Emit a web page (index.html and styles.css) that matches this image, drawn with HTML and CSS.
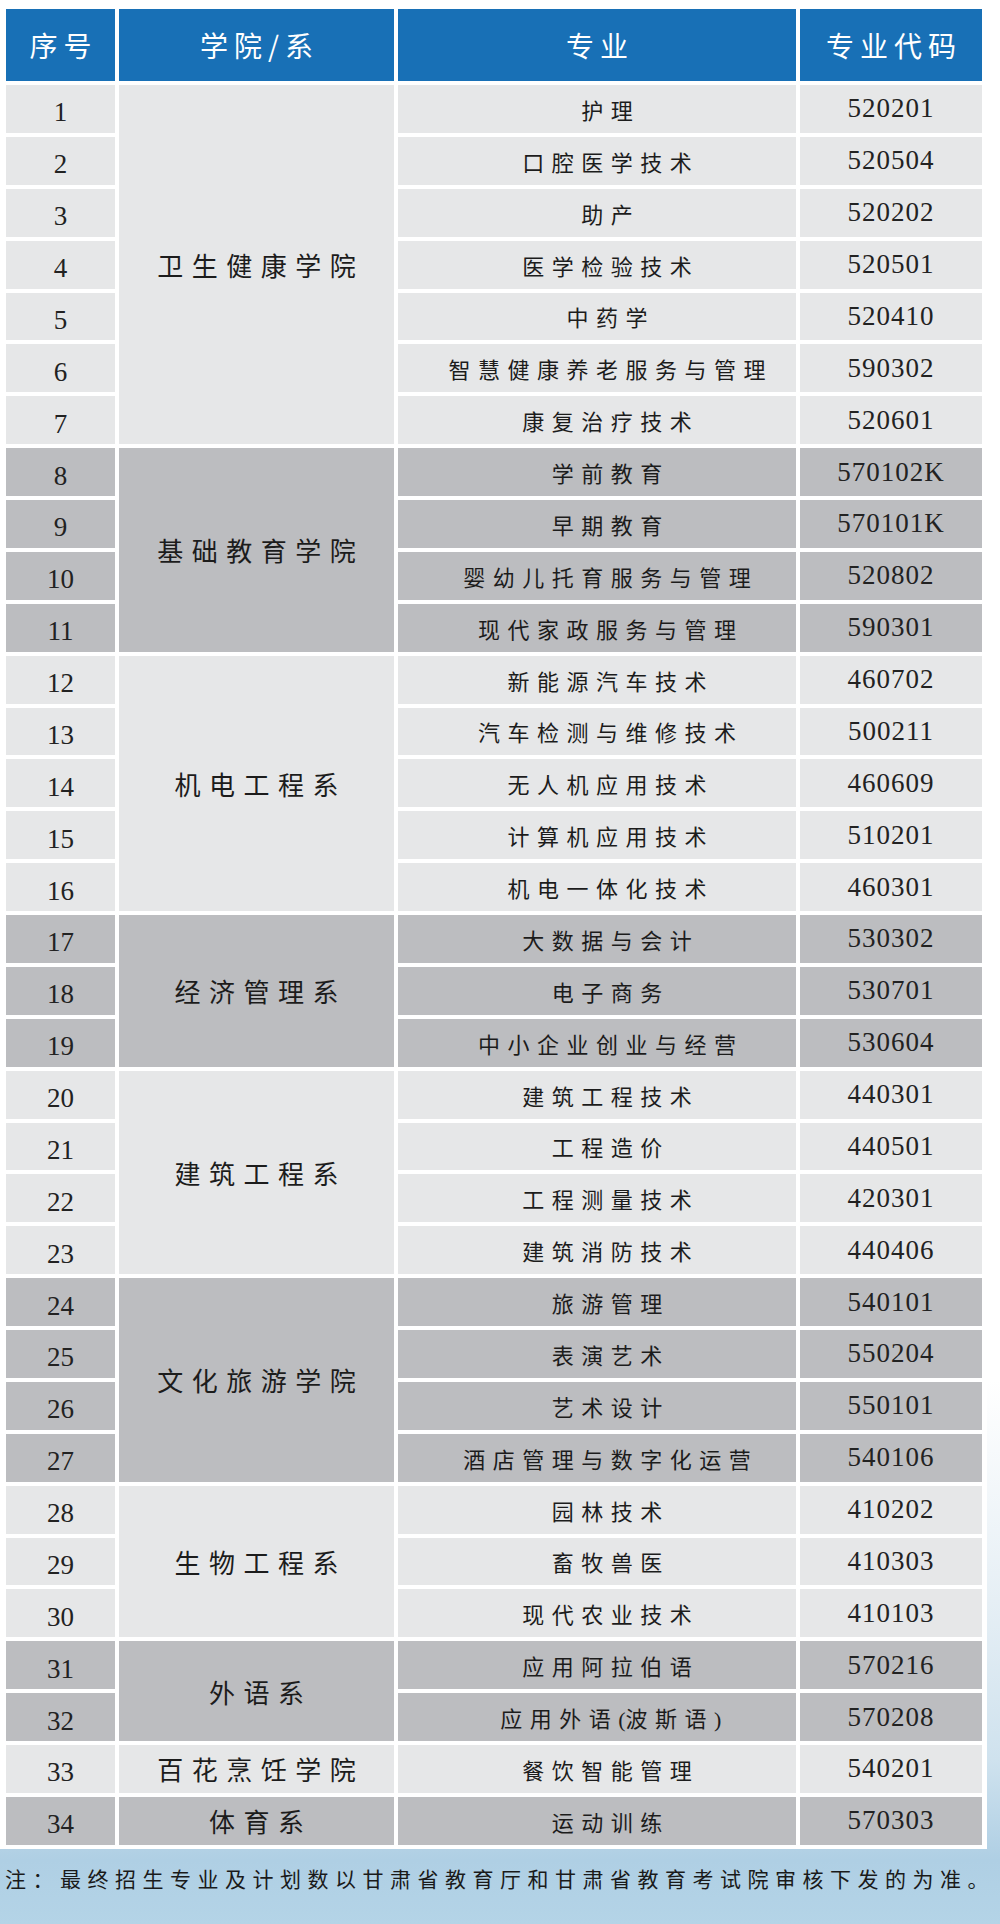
FILE: index.html
```html
<!DOCTYPE html>
<html lang="zh-CN">
<head>
<meta charset="utf-8">
<title>招生专业</title>
<link rel="stylesheet" href="styles.css">
</head>
<body>
<div class="panel">
  <div class="table">
    <div class="th"><span>序号</span></div>
    <div class="th"><span>学院/系</span></div>
    <div class="th"><span>专业</span></div>
    <div class="th"><span>专业代码</span></div>

    <div class="seq lt">1</div><div class="grp lt s7"><span>卫生健康学院</span></div><div class="maj lt"><span>护理</span></div><div class="code lt">520201</div>
    <div class="seq lt">2</div><div class="maj lt"><span>口腔医学技术</span></div><div class="code lt">520504</div>
    <div class="seq lt">3</div><div class="maj lt"><span>助产</span></div><div class="code lt">520202</div>
    <div class="seq lt">4</div><div class="maj lt"><span>医学检验技术</span></div><div class="code lt">520501</div>
    <div class="seq lt">5</div><div class="maj lt"><span>中药学</span></div><div class="code lt">520410</div>
    <div class="seq lt">6</div><div class="maj lt"><span>智慧健康养老服务与管理</span></div><div class="code lt">590302</div>
    <div class="seq lt">7</div><div class="maj lt"><span>康复治疗技术</span></div><div class="code lt">520601</div>

    <div class="seq dk">8</div><div class="grp dk s4"><span>基础教育学院</span></div><div class="maj dk"><span>学前教育</span></div><div class="code dk">570102K</div>
    <div class="seq dk">9</div><div class="maj dk"><span>早期教育</span></div><div class="code dk">570101K</div>
    <div class="seq dk">10</div><div class="maj dk"><span>婴幼儿托育服务与管理</span></div><div class="code dk">520802</div>
    <div class="seq dk">11</div><div class="maj dk"><span>现代家政服务与管理</span></div><div class="code dk">590301</div>

    <div class="seq lt">12</div><div class="grp lt s5"><span>机电工程系</span></div><div class="maj lt"><span>新能源汽车技术</span></div><div class="code lt">460702</div>
    <div class="seq lt">13</div><div class="maj lt"><span>汽车检测与维修技术</span></div><div class="code lt">500211</div>
    <div class="seq lt">14</div><div class="maj lt"><span>无人机应用技术</span></div><div class="code lt">460609</div>
    <div class="seq lt">15</div><div class="maj lt"><span>计算机应用技术</span></div><div class="code lt">510201</div>
    <div class="seq lt">16</div><div class="maj lt"><span>机电一体化技术</span></div><div class="code lt">460301</div>

    <div class="seq dk">17</div><div class="grp dk s3"><span>经济管理系</span></div><div class="maj dk"><span>大数据与会计</span></div><div class="code dk">530302</div>
    <div class="seq dk">18</div><div class="maj dk"><span>电子商务</span></div><div class="code dk">530701</div>
    <div class="seq dk">19</div><div class="maj dk"><span>中小企业创业与经营</span></div><div class="code dk">530604</div>

    <div class="seq lt">20</div><div class="grp lt s4"><span>建筑工程系</span></div><div class="maj lt"><span>建筑工程技术</span></div><div class="code lt">440301</div>
    <div class="seq lt">21</div><div class="maj lt"><span>工程造价</span></div><div class="code lt">440501</div>
    <div class="seq lt">22</div><div class="maj lt"><span>工程测量技术</span></div><div class="code lt">420301</div>
    <div class="seq lt">23</div><div class="maj lt"><span>建筑消防技术</span></div><div class="code lt">440406</div>

    <div class="seq dk">24</div><div class="grp dk s4"><span>文化旅游学院</span></div><div class="maj dk"><span>旅游管理</span></div><div class="code dk">540101</div>
    <div class="seq dk">25</div><div class="maj dk"><span>表演艺术</span></div><div class="code dk">550204</div>
    <div class="seq dk">26</div><div class="maj dk"><span>艺术设计</span></div><div class="code dk">550101</div>
    <div class="seq dk">27</div><div class="maj dk"><span>酒店管理与数字化运营</span></div><div class="code dk">540106</div>

    <div class="seq lt">28</div><div class="grp lt s3"><span>生物工程系</span></div><div class="maj lt"><span>园林技术</span></div><div class="code lt">410202</div>
    <div class="seq lt">29</div><div class="maj lt"><span>畜牧兽医</span></div><div class="code lt">410303</div>
    <div class="seq lt">30</div><div class="maj lt"><span>现代农业技术</span></div><div class="code lt">410103</div>

    <div class="seq dk">31</div><div class="grp dk s2"><span>外语系</span></div><div class="maj dk"><span>应用阿拉伯语</span></div><div class="code dk">570216</div>
    <div class="seq dk">32</div><div class="maj dk"><span>应用外语<span class="paren">(</span>波斯语<span class="paren">)</span></span></div><div class="code dk">570208</div>

    <div class="seq lt">33</div><div class="grp lt s1"><span>百花烹饪学院</span></div><div class="maj lt"><span>餐饮智能管理</span></div><div class="code lt">540201</div>

    <div class="seq dk">34</div><div class="grp dk s1"><span>体育系</span></div><div class="maj dk"><span>运动训练</span></div><div class="code dk">570303</div>
  </div>
</div>
<p class="note">注：最终招生专业及计划数以甘肃省教育厅和甘肃省教育考试院审核下发的为准。</p>
</body>
</html>
```

FILE: styles.css
```css
html, body {
  margin: 0;
  padding: 0;
}

body {
  width: 1000px;
  min-height: 1924px;
  background: linear-gradient(to bottom,
    #ffffff 0px,
    #ffffff 1380px,
    #e6eff5 1600px,
    #cfe2ee 1760px,
    #afcfe4 1860px,
    #b4d4e7 1924px);
  font-family: "Noto Sans CJK SC", "Noto Sans", sans-serif;
  color: #1f1f1f;
}

.panel {
  width: 976px;
  padding: 9px 5px 4px 6px;
  background: #ffffff;
}

.table {
  display: grid;
  grid-template-columns: 109px 275px 398px 182px;
  grid-template-rows: 72px repeat(34, 47.88px);
  column-gap: 4px;
  row-gap: 4px;
}

.table > div {
  display: flex;
  align-items: center;
  justify-content: center;
  box-sizing: border-box;
  white-space: nowrap;
}

.th {
  background: #1870b6;
  color: #ffffff;
  font-size: 28px;
  letter-spacing: 6px;
}

.th span {
  margin-right: -6px;
}

.lt {
  background: #e6e7e8;
}

.dk {
  background: #bcbdc0;
}

.seq,
.code {
  font-family: "Liberation Serif", "Times New Roman", serif;
  font-size: 27px;
  color: #222222;
}

.seq {
  padding-top: 8px;
}

.code {
  letter-spacing: 1px;
}

.maj {
  font-size: 22px;
  letter-spacing: 7.5px;
  padding-left: 20px;
  color: #1c1c1c;
}

.maj > span {
  margin-right: -7.5px;
}

.maj .paren {
  font-family: "Liberation Serif", serif;
  letter-spacing: 0;
}

.grp {
  font-size: 26px;
  letter-spacing: 8.5px;
  color: #1c1c1c;
}

.grp span {
  margin-right: -8.5px;
}

.s1 { grid-row: span 1; }
.s2 { grid-row: span 2; }
.s3 { grid-row: span 3; }
.s4 { grid-row: span 4; }
.s5 { grid-row: span 5; }
.s7 { grid-row: span 7; }

.note {
  margin: 0;
  padding: 14px 0 0 5px;
  font-size: 21px;
  line-height: 30px;
  letter-spacing: 6.5px;
  color: #1a1a1a;
  white-space: nowrap;
}
```
